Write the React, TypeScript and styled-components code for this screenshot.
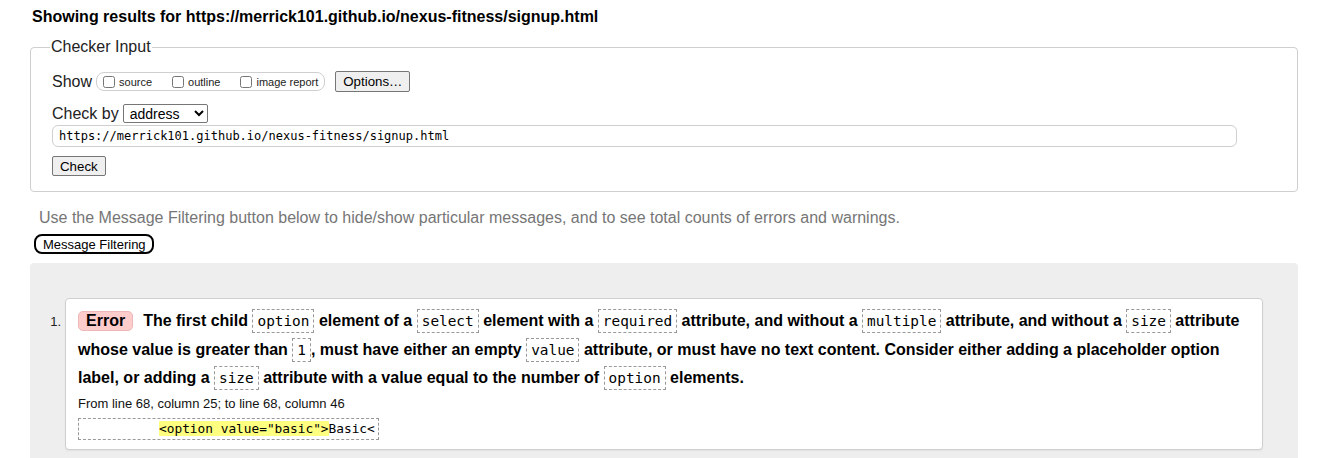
import React from "react";
import styled, { createGlobalStyle } from "styled-components";

const checkedUrl = "https://merrick101.github.io/nexus-fitness/signup.html";

const GlobalStyle = createGlobalStyle`
  body {
    margin: 0;
    background: white;
    color: black;
    font-family: "Liberation Sans", Arial, sans-serif;
  }
`;

const Page = styled.div`
  padding: 0 26px 0 30px;
`;

const Heading = styled.h2`
  margin: 0;
  padding: 8px 0 0 2px;
  font-size: 16px;
  line-height: 18px;
  font-weight: bold;
`;

const Fieldset = styled.fieldset`
  margin: 12px 0 0 0;
  padding: 0 21px 15px 21px;
  border: 1px solid #cfcfcf;
  border-radius: 4px;
`;

const Legend = styled.legend`
  margin-left: -2px;
  padding: 0 1px;
  font-size: 16px;
  line-height: 18px;
  color: #222;
`;

const Row = styled.div<{ $top: number }>`
  display: flex;
  align-items: center;
  margin-top: ${(p) => p.$top}px;
`;

const RowLabel = styled.span`
  font-size: 16px;
  color: #222;
  margin-right: 4px;
`;

const ShowGroup = styled.div`
  display: flex;
  align-items: center;
  height: 17px;
  padding: 0 6px 0 6px;
  border: 1px solid #cfcfcf;
  border-radius: 8px;
  gap: 20px;
`;

const CheckItem = styled.label`
  display: flex;
  align-items: center;
  font-size: 11px;
  color: #222;
`;

const Box = styled.input`
  width: 12px;
  height: 12px;
  margin: 0 4px 0 0;
`;

const NativeButton = styled.button<{ $ml?: number; $h?: number }>`
  height: ${(p) => p.$h ?? 21}px;
  margin-left: ${(p) => p.$ml ?? 0}px;
  padding: 0 7px;
  font-family: "Liberation Sans", Arial, sans-serif;
  font-size: 13.3px;
  color: black;
  background: #efefef;
  border: 1px solid #767676;
  border-radius: 2px;
`;

const Select = styled.select`
  width: 85px;
  height: 19px;
  padding: 0 2px;
  font-family: "Liberation Sans", Arial, sans-serif;
  font-size: 14px;
  color: black;
  background: white;
  border: 1px solid #767676;
  border-radius: 2px;
`;

const UrlInput = styled.input`
  display: block;
  box-sizing: border-box;
  width: 1185px;
  height: 22px;
  margin-top: 2px;
  padding: 0 6px;
  font-family: "DejaVu Sans Mono", monospace;
  font-size: 12px;
  color: black;
  border: 1px solid #cfcfcf;
  border-radius: 6px;
`;

const Hint = styled.p`
  margin: 17px 0 0 9px;
  font-size: 16px;
  line-height: 18px;
  color: #767676;
`;

const FilterButton = styled.button`
  display: block;
  height: 20px;
  margin: 7px 0 0 4px;
  padding: 0 6px 0 7px;
  font-family: "Liberation Sans", Arial, sans-serif;
  font-size: 13px;
  color: black;
  background: white;
  border: 2px solid black;
  border-radius: 8px;
`;

const Results = styled.div`
  margin-top: 9px;
  padding: 35px 35px 40px 0;
  background: #eeeeee;
  border-radius: 4px;
`;

const Item = styled.div`
  display: flex;
  align-items: flex-start;
`;

const ItemNumber = styled.span`
  box-sizing: border-box;
  width: 35px;
  padding-right: 4px;
  margin-top: 9px;
  text-align: right;
  font-size: 13px;
  line-height: 29px;
  color: #222;
`;

const Card = styled.div`
  flex: 1;
  padding: 8px 12px 9px 12px;
  background: white;
  border: 1px solid #cfcfcf;
  border-radius: 4px;
  box-shadow: 0 1px 2px rgba(0, 0, 0, 0.06);
`;

const Message = styled.p`
  margin: 0;
  font-size: 16px;
  font-weight: bold;
  line-height: 28.6px;
`;

const Badge = styled.strong`
  display: inline-block;
  padding: 0 7px;
  margin-right: 10px;
  line-height: 18px;
  background: #ffcccc;
  border: 1px solid #edb8b8;
  border-radius: 5px;
`;

const Code = styled.code`
  padding: 3px 4px;
  font-family: "DejaVu Sans Mono", monospace;
  font-size: 14.4px;
  font-weight: normal;
  border: 1px dashed #999;
`;

const Location = styled.p`
  margin: 2px 0 0 0;
  font-size: 13px;
  line-height: 18px;
  color: #111;
`;

const Extract = styled.pre`
  display: inline-block;
  margin: 5px 0 0 0;
  padding: 1px 3px;
  font-family: "DejaVu Sans Mono", monospace;
  font-size: 12.8px;
  line-height: 18px;
  border: 1px dashed #999;
`;

const Highlight = styled.mark`
  background: #ffff80;
  color: black;
`;

export default function App() {
  return (
    <>
      <GlobalStyle />
      <Page>
        <Heading>Showing results for {checkedUrl}</Heading>
        <Fieldset>
          <Legend>Checker Input</Legend>
          <Row $top={15}>
            <RowLabel>Show</RowLabel>
            <ShowGroup>
              <CheckItem>
                <Box type="checkbox" />
                source
              </CheckItem>
              <CheckItem>
                <Box type="checkbox" />
                outline
              </CheckItem>
              <CheckItem>
                <Box type="checkbox" />
                image report
              </CheckItem>
            </ShowGroup>
            <NativeButton $ml={10}>Options…</NativeButton>
          </Row>
          <Row $top={12}>
            <RowLabel>Check by</RowLabel>
            <Select defaultValue="address">
              <option value="address">address</option>
            </Select>
          </Row>
          <UrlInput defaultValue={checkedUrl} />
          <Row $top={9}>
            <NativeButton $h={20}>Check</NativeButton>
          </Row>
        </Fieldset>
        <Hint>
          Use the Message Filtering button below to hide/show particular messages, and to see
          total counts of errors and warnings.
        </Hint>
        <FilterButton>Message Filtering</FilterButton>
        <Results>
          <Item>
            <ItemNumber>1.</ItemNumber>
            <Card>
              <Message>
                <Badge>Error</Badge>The first child <Code>option</Code> element of a{" "}
                <Code>select</Code> element with a <Code>required</Code> attribute, and without a{" "}
                <Code>multiple</Code> attribute, and without a <Code>size</Code> attribute whose
                value is greater than <Code>1</Code>, must have either an empty{" "}
                <Code>value</Code> attribute, or must have no text content. Consider either adding
                a placeholder option label, or adding a <Code>size</Code> attribute with a value
                equal to the number of <Code>option</Code> elements.
              </Message>
              <Location>From line 68, column 25; to line 68, column 46</Location>
              <Extract>
                {"          "}
                <Highlight>{'<option value="basic">'}</Highlight>
                {"Basic<"}
              </Extract>
            </Card>
          </Item>
        </Results>
      </Page>
    </>
  );
}
